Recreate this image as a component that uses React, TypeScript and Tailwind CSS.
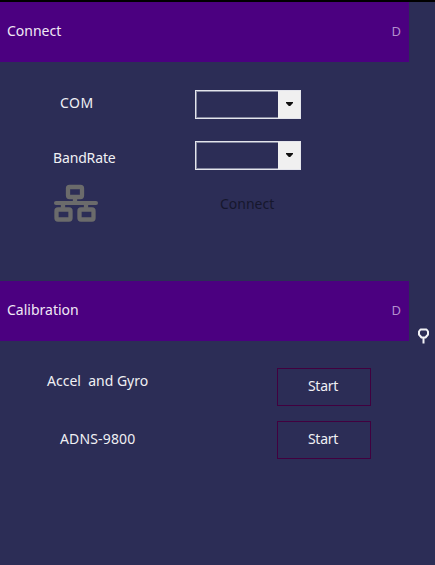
import React from "react";

function Header({ title }: { title: string }) {
  return (
    <header className="flex h-[60px] w-[409px] shrink-0 items-center justify-between bg-[#4b0080] pb-[2px] pl-[7px] pr-[8px]">
      <span className="text-[#f0e8f5]">{title}</span>
      <span className="text-[13px] text-[#b48fcd]">D</span>
    </header>
  );
}

function Combo() {
  return (
    <button className="flex h-[29px] w-[106px] border border-[#e4e5ec] shadow-[inset_0_0_0_1px_#8588a0]">
      <span className="flex-1" />
      <span className="flex h-full w-[22px] items-center justify-center bg-[#f0f0f0] pb-px pl-px">
        <svg width="7" height="4" viewBox="0 0 7 4">
          <path d="M0 0H7V1L4.200 4H2.800L0 1Z" fill="#111" />
        </svg>
      </span>
    </button>
  );
}

function StartButton() {
  return (
    <button className="flex h-[38px] w-[94px] items-center justify-center border border-[#42003f] pr-[2px] pb-[2px] tracking-[-0.25px]">
      Start
    </button>
  );
}

export default function App() {
  return (
    <div className="flex h-[565px] w-[435px] flex-col overflow-hidden border-t-2 border-black bg-[#2c2d56] font-['Noto_Sans','Open_Sans',sans-serif] text-[14px] leading-[20px] text-[#f0f0f4]">
      <Header title="Connect" />
      <section className="flex h-[219px] w-[409px] shrink-0">
        <div className="flex w-[195px] flex-col pt-[31px]">
          <span className="pl-[60px] tracking-[0.5px]">COM</span>
          <span className="mt-[35px] pl-[53px] tracking-[-0.15px]">BandRate</span>
          <svg className="mt-[16px] ml-[53px]" width="46" height="38" viewBox="0 0 46 38" fill="none" stroke="#6b6b6b" strokeWidth="4.300">
            <rect x="15" y="3" width="14" height="10" rx="1.5" />
            <path d="M22 13V19M10 19V25M33 19V25" />
            <path d="M3 19H43" strokeLinecap="round" strokeWidth="4" />
            <rect x="3.500" y="25.500" width="14" height="10" rx="1.500" />
            <rect x="26.500" y="25.500" width="14" height="10" rx="1.500" />
          </svg>
        </div>
        <div className="flex flex-col pt-[28px]">
          <Combo />
          <div className="h-[22px]" />
          <Combo />
          <button className="mt-[24px] ml-[25px] w-[56px] text-left text-[#16172d]">Connect</button>
        </div>
      </section>
      <div className="flex h-[284px]">
        <section className="flex w-[409px] shrink-0 flex-col">
          <Header title="Calibration" />
          <div className="flex">
            <div className="flex w-[277px] flex-col pt-[30px]">
              <span className="whitespace-pre pl-[47px]">{"Accel  and Gyro"}</span>
              <span className="mt-[38px] pl-[60px] tracking-[0.15px]">ADNS-9800</span>
            </div>
            <div className="flex flex-col gap-[15px] pt-[27px]">
              <StartButton />
              <StartButton />
            </div>
          </div>
        </section>
        <aside className="pt-[47px] pl-[8px]">
          <svg width="13" height="17" viewBox="0 0 13 17" fill="none" stroke="#f2f2f6" strokeWidth="2">
            <path d="M3.500 1.500H9.500L11 3.500V6.500L8.500 9.500H4.500L2 6.500V3.500Z" strokeLinejoin="round" />
            <path d="M6.500 10V15.500" />
          </svg>
        </aside>
      </div>
    </div>
  );
}
